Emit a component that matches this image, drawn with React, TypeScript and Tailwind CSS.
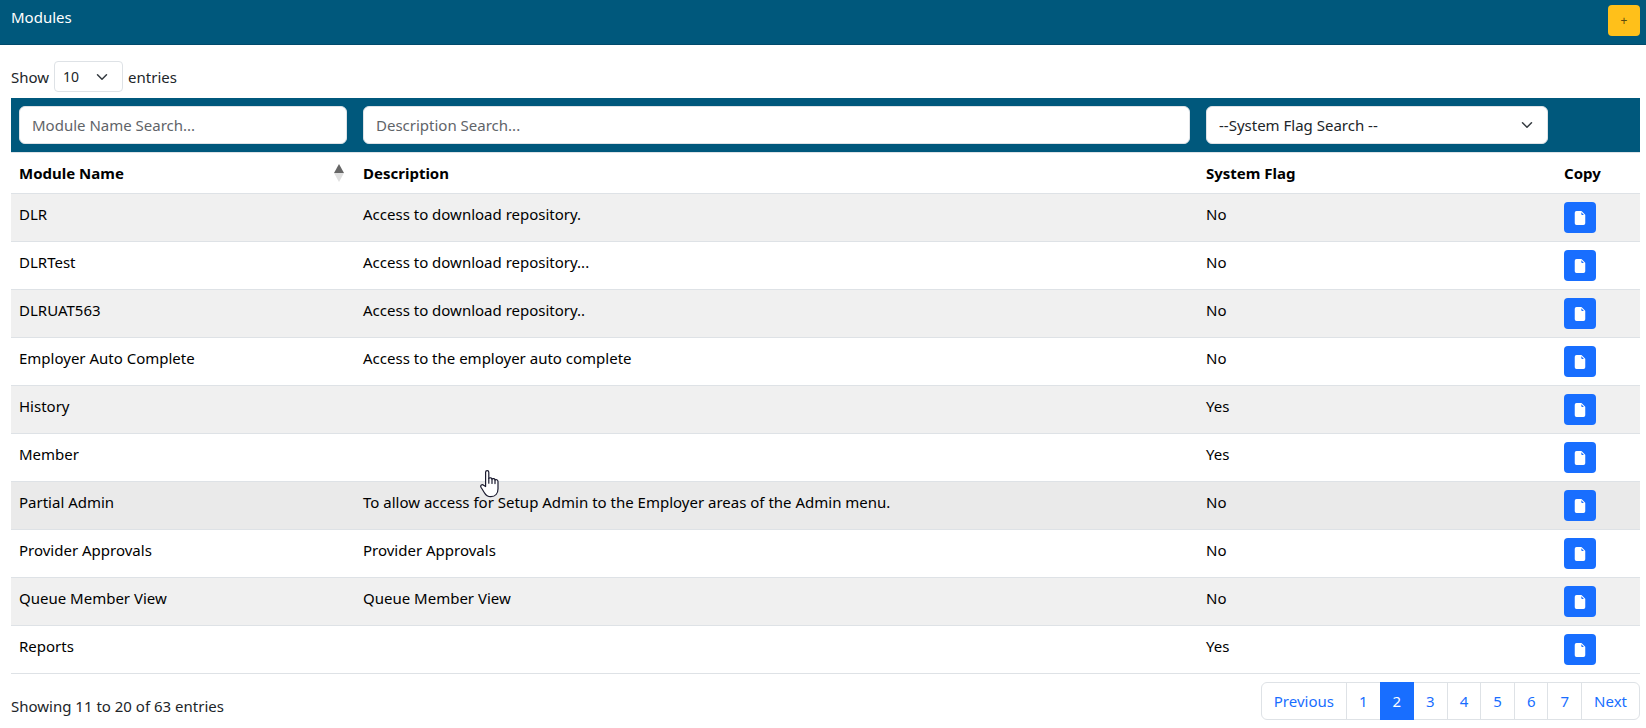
import { useState } from 'react';

interface IModule {
    name: string;
    description: string;
    systemFlag: boolean;
}

const modules: IModule[] = [
    { name: 'DLR', description: 'Access to download repository.', systemFlag: false },
    { name: 'DLRTest', description: 'Access to download repository...', systemFlag: false },
    { name: 'DLRUAT563', description: 'Access to download repository..', systemFlag: false },
    { name: 'Employer Auto Complete', description: 'Access to the employer auto complete', systemFlag: false },
    { name: 'History', description: '', systemFlag: true },
    { name: 'Member', description: '', systemFlag: true },
    { name: 'Partial Admin', description: 'To allow access for Setup Admin to the Employer areas of the Admin menu.', systemFlag: false },
    { name: 'Provider Approvals', description: 'Provider Approvals', systemFlag: false },
    { name: 'Queue Member View', description: 'Queue Member View', systemFlag: false },
    { name: 'Reports', description: '', systemFlag: true },
];

const pages = ['Previous', '1', '2', '3', '4', '5', '6', '7', 'Next'];
const hoveredRow = 'Partial Admin';

const Chevron = ({ className }: { className: string }) => (
    <svg className={`pointer-events-none absolute top-1/2 -translate-y-1/2 ${className}`} width="12" height="12" viewBox="0 0 16 16" fill="none" stroke="#343a40" strokeWidth="2" strokeLinecap="round" strokeLinejoin="round">
        <path d="m2 5 6 6 6-6" />
    </svg>
);

const FileIcon = () => (
    <svg width="14" height="14" viewBox="0 0 16 16" fill="#fff">
        <path d="M4 0h5.293A1 1 0 0 1 10 .293L13.707 4a1 1 0 0 1 .293.707V14a2 2 0 0 1-2 2H4a2 2 0 0 1-2-2V2a2 2 0 0 1 2-2m5.5 1.5v2a1 1 0 0 0 1 1h2z" />
    </svg>
);

const SortIcon = () => (
    <svg width="10" height="18" viewBox="0 0 10 18">
        <path d="M5 0l5 9H0z" fill="#666" />
        <path d="M0 9h10l-5 9z" fill="#e0e0e0" />
    </svg>
);

const PointerCursor = () => (
    <svg className="pointer-events-none absolute -top-3 left-[125px]" width="19" height="28" viewBox="0 0 19 28" fill="#fff" stroke="#1a1a2e" strokeWidth="1.2" strokeLinejoin="round" strokeLinecap="round">
        <path d="M5.6 16.5V2.3c0-2.2 3.2-2.2 3.2 0v6.2c.8-1.2 3-.9 3.2.6.9-.9 2.8-.6 3 .8 1-.7 3-.2 3 1.6v7.2c0 4.600-2.600 8-7.200 8-3.200 0-5-1.500-6.400-4L1 17.300c-1-2 1.200-3.400 2.600-2.100z" />
        <path d="M8.8 8.5v4.7M12 9.1v4.3M15 9.9v3.7" fill="none" />
    </svg>
);

const App = () => {
    const [pageSize, setPageSize] = useState('10');
    const [currentPage, setCurrentPage] = useState('2');
    const [nameSearch, setNameSearch] = useState('');
    const [descriptionSearch, setDescriptionSearch] = useState('');
    const [flagSearch, setFlagSearch] = useState('');

    return (
        <div className="min-h-screen bg-white font-['Noto_Sans',sans-serif] text-[15px] leading-6 text-[#212529]">
            <header className="flex h-[45px] items-start justify-between border-b border-[#004a6c] bg-[#00587c] pt-[5px] pr-[6px] pl-[11px]">
                <h1 className="text-white">Modules</h1>
                <button type="button" aria-label="Add module" className="h-[31px] w-8 rounded bg-[#ffc01a] text-xs text-[#5c4a10]">+</button>
            </header>

            <main className="pt-4 pr-[6px] pl-[11px]">
                <label className="flex items-center gap-[5px]">
                    Show
                    <span className="relative">
                        <select value={pageSize} onChange={(e) => setPageSize(e.target.value)} className="block h-[31px] w-[69px] appearance-none rounded border border-[#dee2e6] bg-white pl-2 text-sm">
                            <option>10</option>
                            <option>25</option>
                            <option>50</option>
                            <option>100</option>
                        </select>
                        <Chevron className="right-[15px]" />
                    </span>
                    entries
                </label>

                <table className="mt-[6px] w-full table-fixed border-collapse text-left text-black">
                    <colgroup>
                        <col className="w-[344px]" />
                        <col />
                        <col className="w-[358px]" />
                        <col className="w-[84px]" />
                    </colgroup>
                    <thead>
                        <tr className="border-b border-[#dee2e6] bg-[#00587c]">
                            <td className="p-2">
                                <input aria-label="Module name search" placeholder="Module Name Search..." value={nameSearch} onChange={(e) => setNameSearch(e.target.value)} className="block h-[38px] w-full rounded-md border border-[#dee2e6] bg-white px-3 placeholder:text-[#5f6469]" />
                            </td>
                            <td className="p-2">
                                <input aria-label="Description search" placeholder="Description Search..." value={descriptionSearch} onChange={(e) => setDescriptionSearch(e.target.value)} className="block h-[38px] w-full rounded-md border border-[#dee2e6] bg-white px-3 placeholder:text-[#5f6469]" />
                            </td>
                            <td className="p-2">
                                <div className="relative">
                                    <select aria-label="System flag search" value={flagSearch} onChange={(e) => setFlagSearch(e.target.value)} className="block h-[38px] w-full appearance-none rounded-md border border-[#dee2e6] bg-white px-3 text-[#212529]">
                                        <option value="">--System Flag Search --</option>
                                        <option>Yes</option>
                                        <option>No</option>
                                    </select>
                                    <Chevron className="right-[15px]" />
                                </div>
                            </td>
                            <td></td>
                        </tr>
                        <tr className="h-[41px] border-b border-[#dee2e6]">
                            <th scope="col" className="px-2 font-bold">
                                <div className="flex items-center justify-between pr-[3px]">
                                    Module Name
                                    <SortIcon />
                                </div>
                            </th>
                            <th scope="col" className="px-2 font-bold">Description</th>
                            <th scope="col" className="px-2 font-bold">System Flag</th>
                            <th scope="col" className="px-2 font-bold">Copy</th>
                        </tr>
                    </thead>
                    <tbody>
                        {modules.map((item) => (
                            <tr key={item.name} className={`h-12 border-b border-[#dee2e6] align-top ${item.name === hoveredRow ? 'bg-[#eaeaea]' : 'odd:bg-[#f0f0f0]'}`}>
                                <td className="p-2">{item.name}</td>
                                <td className="relative p-2">
                                    {item.description}
                                    {item.name === hoveredRow && <PointerCursor />}
                                </td>
                                <td className="p-2">{item.systemFlag ? 'Yes' : 'No'}</td>
                                <td className="p-2">
                                    <button type="button" aria-label={`Copy ${item.name}`} className="flex h-[31px] w-8 items-center justify-center rounded bg-[#186eff]">
                                        <FileIcon />
                                    </button>
                                </td>
                            </tr>
                        ))}
                    </tbody>
                </table>

                <div className="flex items-start justify-between pt-2">
                    <p className="pt-3">Showing 11 to 20 of 63 entries</p>
                    <nav aria-label="Pages">
                        <ul className="flex">
                            {pages.map((page) => (
                                <li key={page} className="group -ml-px">
                                    <a
                                        href="#"
                                        onClick={() => setCurrentPage(page)}
                                        className={`block border px-3 py-[6px] group-first:rounded-l-md group-last:rounded-r-md ${page === currentPage ? 'relative border-[#186eff] bg-[#186eff] text-white' : 'border-[#dee2e6] text-[#186eff]'}`}
                                    >
                                        {page}
                                    </a>
                                </li>
                            ))}
                        </ul>
                    </nav>
                </div>
            </main>
        </div>
    );
};

export default App;
